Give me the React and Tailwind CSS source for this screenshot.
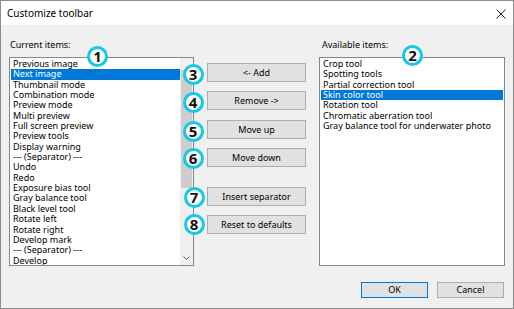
import React from "react";

const current = [
  "Previous image",
  "Next image",
  "Thumbnail mode",
  "Combination mode",
  "Preview mode",
  "Multi preview",
  "Full screen preview",
  "Preview tools",
  "Display warning",
  "--- (Separator) ---",
  "Undo",
  "Redo",
  "Exposure bias tool",
  "Gray balance tool",
  "Black level tool",
  "Rotate left",
  "Rotate right",
  "Develop mark",
  "--- (Separator) ---",
  "Develop",
];

const available = [
  "Crop tool",
  "Spotting tools",
  "Partial correction tool",
  "Skin color tool",
  "Rotation tool",
  "Chromatic aberration tool",
  "Gray balance tool for underwater photo",
];

function Item({ text, selected }) {
  return (
    <div
      className={
        "h-[10.35px] leading-[10.35px] pl-[2px] whitespace-nowrap " +
        (selected ? "bg-[#0078d7] text-white" : "text-black")
      }
    >
      {text}
    </div>
  );
}

function Btn({ children, className = "" }) {
  return (
    <div
      className={
        "h-[19px] w-[99px] flex items-center justify-center bg-[#e1e1e1] border border-[#adadad] text-[9px] text-black " +
        className
      }
    >
      {children}
    </div>
  );
}

function Badge({ n, x, y }) {
  return (
    <div
      className="absolute w-[21px] h-[21px] rounded-full border-[3px] border-[#14c8e6] bg-white flex items-center justify-center text-[15px] font-bold text-[#111] leading-none"
      style={{ left: x - 10.5, top: y - 10.5 }}
    >
      {n}
    </div>
  );
}

export default function App() {
  return (
    <div
      className="relative w-[514px] h-[309px] border border-[#8c8c8c] flex flex-col overflow-hidden"
      style={{ fontFamily: '"Noto Sans", "Open Sans", sans-serif' }}
    >
      <div className="h-[24px] bg-white flex items-center justify-between pl-[6px] pr-[7px] shrink-0">
        <span className="text-[10px] text-black">Customize toolbar</span>
        <svg width="10" height="10" viewBox="0 0 10 10" className="mt-[1px]">
          <path d="M0.5 0.5 L9.5 9.5 M9.5 0.5 L0.5 9.5" stroke="#222" strokeWidth="1" />
        </svg>
      </div>
      <div className="flex-1 bg-[#f0f0f0] flex flex-col pl-[8px] pr-[8px]">
        <div className="flex pt-[14px]">
          <div className="flex flex-col w-[185px]">
            <div className="h-[12px] leading-[12px] text-[9px] text-black pl-[1px]">Current items:</div>
            <div className="mt-[6px] h-[209px] border border-[#828790] bg-white flex text-[9px]">
              <div className="flex-1 pt-[1px] pl-[1px] overflow-hidden">
                {current.map((t, i) => (
                  <Item key={i} text={t} selected={i === 1} />
                ))}
              </div>
              <div className="w-[13px] bg-[#f0f0f0] flex flex-col">
                <div className="h-[12px]" />
                <div className="h-[118px] mx-[1px] bg-[#cdcdcd]" />
                <div className="flex-1 flex items-end justify-center pb-[5px]">
                  <svg width="7" height="4" viewBox="0 0 7 4">
                    <path d="M0.5 0.5 L3.5 3.5 L6.5 0.5" stroke="#606060" strokeWidth="1" fill="none" />
                  </svg>
                </div>
              </div>
            </div>
          </div>
          <div className="flex flex-col ml-[13px] pt-[24px]">
            <Btn>&lt;- Add</Btn>
            <Btn className="mt-[9px]">Remove -&gt;</Btn>
            <Btn className="mt-[10px]">Move up</Btn>
            <Btn className="mt-[9px]">Move down</Btn>
            <Btn className="mt-[20px]">Insert separator</Btn>
            <Btn className="mt-[9px]">Reset to defaults</Btn>
          </div>
          <div className="flex flex-col w-[186px] ml-[13px]">
            <div className="h-[12px] leading-[12px] text-[9px] text-black pl-[3px]">Available items:</div>
            <div className="mt-[6px] h-[209px] border border-[#828790] bg-white text-[9px] pt-[1px] px-[1px]">
              {available.map((t, i) => (
                <Item key={i} text={t} selected={i === 3} />
              ))}
            </div>
          </div>
        </div>
        <div className="flex justify-end gap-[9px] mt-[16px] pr-[1px]">
          <div className="w-[67px] h-[16px] flex items-center justify-center bg-[#e1e1e1] border border-[#0078d7] text-[9px] text-black">
            OK
          </div>
          <div className="w-[67px] h-[16px] flex items-center justify-center bg-[#e1e1e1] border border-[#adadad] text-[9px] text-black">
            Cancel
          </div>
        </div>
      </div>
      <Badge n="1" x={96.5} y={55} />
      <Badge n="2" x={411.5} y={54} />
      <Badge n="3" x={192} y={73} />
      <Badge n="4" x={192} y={101.5} />
      <Badge n="5" x={192} y={130} />
      <Badge n="6" x={192} y={157.5} />
      <Badge n="7" x={193} y={196.5} />
      <Badge n="8" x={193} y={223.5} />
    </div>
  );
}
